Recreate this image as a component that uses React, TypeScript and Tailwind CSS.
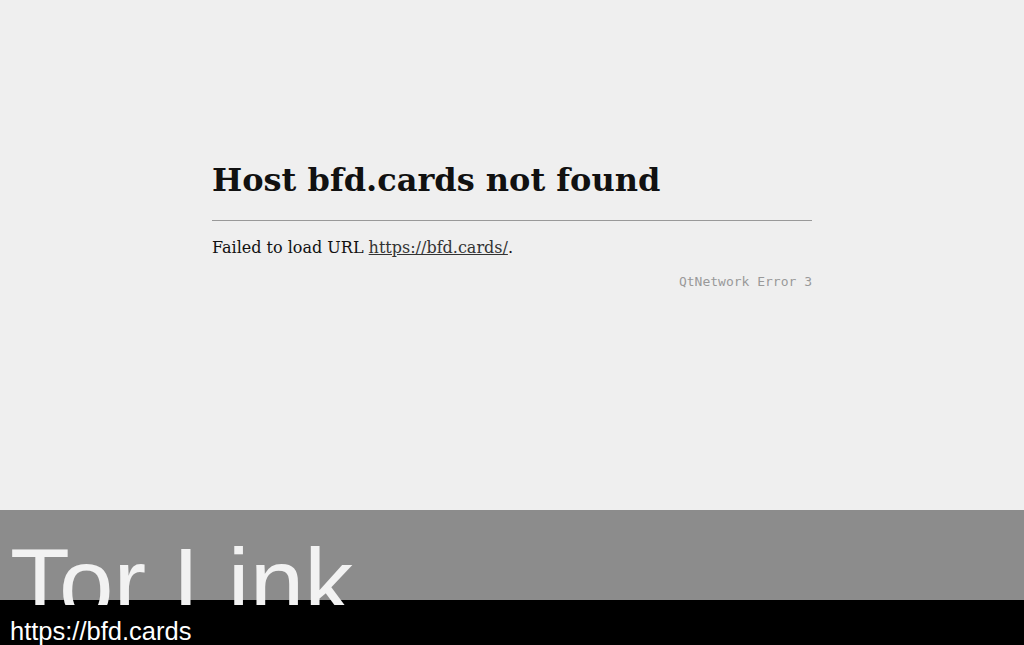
import React from "react";

const serif = { fontFamily: '"DejaVu Serif", serif' };
const sans = { fontFamily: '"Liberation Sans", Arial, sans-serif' };

const ErrorPage: React.FC = () => {
  return (
    <div className="flex h-[510px] shrink-0 justify-center bg-[#efefef]">
      <div className="w-[600px] pt-[158px]" style={serif}>
        <h1 className="text-[32px] font-bold leading-[44px] text-[#111]">
          Host bfd.cards not found
        </h1>
        <hr className="mt-[18px] border-0 border-t border-[#999]" />
        <p className="mt-[16px] text-[16px] leading-[22px] text-[#111]">
          Failed to load URL{" "}
          <a href="#" className="text-[#333] underline">
            https://bfd.cards/
          </a>
          .
        </p>
        <p
          className="mt-[15px] text-right text-[13px] leading-[16px] text-[#999]"
          style={{ fontFamily: '"DejaVu Sans Mono", monospace' }}
        >
          QtNetwork Error 3
        </p>
      </div>
    </div>
  );
};

export default function App() {
  return (
    <div className="flex h-[645px] w-[1024px] flex-col overflow-hidden">
      <ErrorPage />
      <div className="relative flex h-[135px] shrink-0 flex-col" style={sans}>
        <div className="h-[90px] shrink-0 bg-[#8c8c8c]" />
        <div className="h-[45px] shrink-0 bg-black pl-[10px] pt-[17px] text-[25.5px] leading-[28px] text-white">
          https://bfd.cards
        </div>
        {/* big label spills a few px over the black status bar */}
        <div className="absolute left-0 top-0 h-[95px] overflow-hidden pl-[10px] pt-[24px] text-[98px] leading-[1] text-[#f2f2f2]">
          Tor Link
        </div>
      </div>
    </div>
  );
}
